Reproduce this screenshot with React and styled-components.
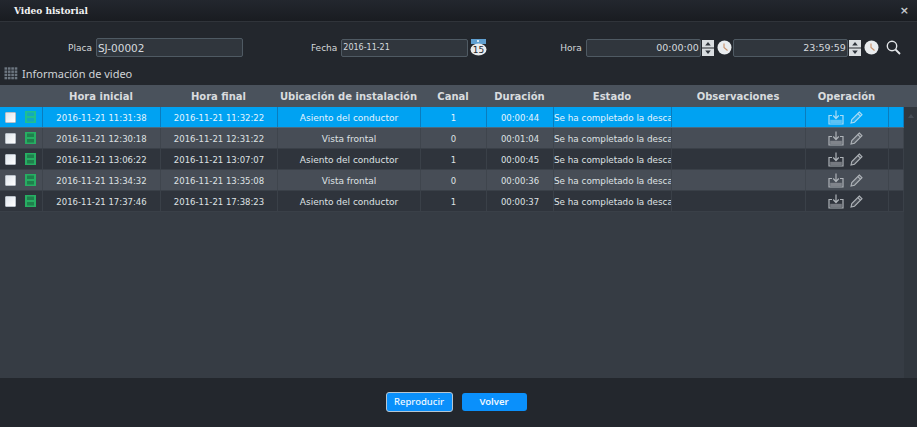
import React from "react";
import styled, { createGlobalStyle } from "styled-components";

const Global = createGlobalStyle`
  html, body { margin: 0; padding: 0; width: 917px; height: 427px; overflow: hidden; background: #23272d; }
  * { box-sizing: border-box; }
`;

const COLS = "43px 118px 117px 143px 66px 67px 118px 134px 83px 15px";

const Page = styled.div`
  width: 917px;
  height: 427px;
  display: flex;
  flex-direction: column;
  font-family: "DejaVu Sans", sans-serif;
  color: #e4e7ea;
  background: #23272d;
`;
const TitleBar = styled.div`
  height: 22px;
  flex: none;
  display: flex;
  align-items: center;
  justify-content: space-between;
  padding: 0 8px 0 14px;
  background: linear-gradient(#23272e, #191c21);
  border-bottom: 1px solid #30343a;
`;
const Title = styled.span`
  font-family: "DejaVu Serif", serif;
  font-size: 9px;
  font-weight: 700;
  color: #f2f3f4;
`;
const Close = styled.span`
  font-size: 11px;
  font-weight: 700;
  color: #c6cacd;
`;
const Filters = styled.div`
  height: 41px;
  flex: none;
  display: flex;
  align-items: center;
  padding: 10px 0 0 68px;
`;
const Label = styled.span`
  font-size: 9px;
  color: #d4d7da;
  margin-right: 4px;
`;
const Input = styled.div`
  width: ${p => p.$w}px;
  height: ${p => p.$h || 18}px;
  display: flex;
  align-items: center;
  justify-content: ${p => (p.$right ? "flex-end" : "flex-start")};
  padding: 0 1px;
  margin-left: ${p => p.$ml || 0}px;
  font-size: ${p => p.$fs || 9.5}px;
  color: #d6dadd;
  background: #30363d;
  border: 1px solid #4f5a63;
  border-radius: 2px;
`;
const Spinner = styled.div`
  width: 12px;
  height: 16px;
  margin-left: 1px;
  flex: none;
`;
const Group = styled.div`
  display: flex;
  align-items: center;
  margin-left: ${p => p.$ml}px;
`;
const SectionHead = styled.div`
  height: 22px;
  flex: none;
  display: flex;
  align-items: center;
  gap: 4px;
  padding: 0 0 2px 4px;
  font-family: "Noto Sans", sans-serif;
  font-size: 11px;
  color: #d0d4d8;
`;
const TablePanel = styled.div`
  flex: 1;
  display: flex;
  background: #363c44;
  min-height: 0;
`;
const TableMain = styled.div`
  width: 904px;
  flex: none;
`;
const ScrollTrack = styled.div`
  width: 13px;
  flex: none;
  display: flex;
  flex-direction: column;
  align-items: center;
  background: #31373e;
`;
const ScrollTop = styled.div`
  width: 100%;
  height: 22px;
  background: #4a525c;
  flex: none;
`;
const ScrollUp = styled.div`
  margin-top: 7px;
  border-left: 3px solid transparent;
  border-right: 3px solid transparent;
  border-bottom: 4px solid #454c55;
`;
const HeadRow = styled.div`
  display: grid;
  grid-template-columns: ${COLS};
  height: 22px;
  background: #4a525c;
`;
const HeadCell = styled.div`
  display: flex;
  align-items: center;
  justify-content: center;
  padding-right: 2px;
  font-size: 10px;
  font-weight: 700;
  color: #d9dcdf;
  white-space: nowrap;
  overflow: hidden;
`;
const Row = styled.div`
  display: grid;
  grid-template-columns: ${COLS};
  height: 21px;
  border-bottom: 1px solid ${p => (p.$selected ? "#4a6a80" : "#3a4048")};
  background: ${p => (p.$selected ? "#00a2f2" : p.$odd ? "#474d56" : "#2f343c")};
`;
const Cell = styled.div`
  display: flex;
  align-items: center;
  justify-content: ${p => (p.$left ? "flex-start" : "center")};
  padding-top: 1px;
  font-size: ${p => p.$fs || 9}px;
  color: ${p => (p.$selected ? "#e6f4fd" : "#dfe2e4")};
  white-space: nowrap;
  overflow: hidden;
  border-right: 1px solid ${p => (p.$selected ? "#0a7cbd" : p.$odd ? "#3f454d" : "#3a4048")};
`;
const IconCell = styled(Cell)`
  gap: 9px;
  justify-content: flex-start;
  padding: 0 0 0 5px;
`;
const ActionCell = styled(Cell)`
  gap: 6px;
  padding: 0 3px 0 0;
`;
const Check = styled.span`
  width: 11px;
  height: 11px;
  background: linear-gradient(135deg, #dfe5ec, #ffffff);
  border: 1px solid #b9c0c8;
  border-radius: 1px;
  flex: none;
`;
const Footer = styled.div`
  height: 49px;
  flex: none;
  display: flex;
  align-items: center;
  justify-content: center;
  gap: 9px;
  padding: 0 5px 2px 0;
  background: #23272d;
`;
const Button = styled.button`
  width: ${p => p.$w}px;
  height: ${p => (p.$focus ? 20 : 18)}px;
  padding: 0;
  font-family: "Noto Sans", sans-serif;
  font-size: 9.5px;
  font-weight: ${p => (p.$focus ? 500 : 600)};
  color: #eef7ff;
  background: #0a90fb;
  border: ${p => (p.$focus ? "1px solid #b8c6d2" : "none")};
  border-radius: 3px;
`;

const GridIcon = () => (
  <svg width="14" height="13" viewBox="0 0 14 13">
    {[0, 1, 2, 3].map(r =>
      [0, 1, 2, 3].map(c => (
        <rect key={`${r}${c}`} x={c * 3.4 + 0.5} y={r * 3.2 + 0.3} width="2.6" height="2.4" fill="#6d7781" />
      ))
    )}
  </svg>
);

const FilmIcon = ({ light }) => (
  <svg width="11" height="12" viewBox="0 0 11 12">
    <rect x="0" y="0" width="11" height="12" fill={light ? "#1fc08f" : "#27ae63"} />
    <rect x="2" y="1.5" width="7" height="3.5" fill={light ? "#14a9bd" : "#1f7f4c"} />
    <rect x="2" y="7" width="7" height="3.5" fill={light ? "#14a9bd" : "#1f7f4c"} />
  </svg>
);

const DownloadIcon = ({ color }) => (
  <svg width="16" height="15" viewBox="0 0 16 15" fill="none" stroke={color} strokeWidth="1.2">
    <path d="M4 5.5H1v8.5h14V5.5h-3" />
    <path d="M8 0.5v7.5M5.2 5.5 8 8.5l2.8-3" />
    <rect x="2.2" y="9.8" width="11.6" height="3.2" fill={color} fillOpacity="0.55" stroke="none" />
  </svg>
);

const PencilIcon = ({ color }) => (
  <svg width="13" height="13" viewBox="0 0 13 13" fill={color} fillOpacity="0.2" stroke={color} strokeWidth="1.1">
    <path d="M9.3 1 12 3.7 4.5 11.2 1 12l.8-3.5z" />
    <path d="M7.8 2.6 10.4 5.2" />
  </svg>
);

const SpinnerIcon = () => (
  <Spinner>
    <svg width="12" height="16" viewBox="0 0 12 16">
      <rect x="0" y="0" width="12" height="7.5" fill="#d9dde0" />
      <rect x="0" y="8.5" width="12" height="7.5" fill="#d9dde0" />
      <path d="M6 2 8.8 5.5H3.2z" fill="#30363d" />
      <path d="M6 14 8.8 10.5H3.2z" fill="#30363d" />
    </svg>
  </Spinner>
);

const ClockIcon = () => (
  <svg width="15" height="15" viewBox="0 0 15 15" style={{ marginLeft: 3 }}>
    <circle cx="7.5" cy="7.5" r="7" fill="#e9ecee" />
    <path d="M7 3.5V7.5L10.5 10.5" fill="none" stroke="#c9916a" strokeWidth="1.1" />
  </svg>
);

const CalendarIcon = () => (
  <svg width="17" height="17" viewBox="0 0 17 17" style={{ marginLeft: 2 }}>
    <rect x="1" y="0" width="15" height="5" fill="#5f9fd0" />
    <rect x="7" y="1" width="2" height="2" fill="#d5e6f2" />
    <ellipse cx="8.5" cy="10.5" rx="8" ry="6" fill="#e8ebed" />
    <text x="8.5" y="14" textAnchor="middle" fontSize="9" fontFamily="DejaVu Sans" fill="#23272d">15</text>
  </svg>
);

const SearchIcon = () => (
  <svg width="15" height="15" viewBox="0 0 15 15" fill="none" stroke="#e4e7ea" strokeWidth="1.4" style={{ marginLeft: 7 }}>
    <circle cx="6" cy="6" r="4.7" />
    <path d="M9.5 9.5 14 14" strokeWidth="1.8" />
  </svg>
);

const columns = ["", "Hora inicial", "Hora final", "Ubicación de instalación", "Canal", "Duración", "Estado", "Observaciones", "Operación", ""];

const rows = [
  ["2016-11-21 11:31:38", "2016-11-21 11:32:22", "Asiento del conductor", "1", "00:00:44"],
  ["2016-11-21 12:30:18", "2016-11-21 12:31:22", "Vista frontal", "0", "00:01:04"],
  ["2016-11-21 13:06:22", "2016-11-21 13:07:07", "Asiento del conductor", "1", "00:00:45"],
  ["2016-11-21 13:34:32", "2016-11-21 13:35:08", "Vista frontal", "0", "00:00:36"],
  ["2016-11-21 17:37:46", "2016-11-21 17:38:23", "Asiento del conductor", "1", "00:00:37"]
];

const App = () => (
  <Page>
    <Global />
    <TitleBar>
      <Title>Video historial</Title>
      <Close>×</Close>
    </TitleBar>
    <Filters>
      <Label>Placa</Label>
      <Input $w={147} $h={19} $fs={10.5}>SJ-00002</Input>
      <Group $ml={68}>
        <Label>Fecha</Label>
        <Input $w={127} $fs={8}>2016-11-21</Input>
        <CalendarIcon />
      </Group>
      <Group $ml={73}>
        <Label>Hora</Label>
        <Input $w={115} $right>00:00:00</Input>
        <SpinnerIcon />
        <ClockIcon />
        <Input $w={115} $ml={1} $right>23:59:59</Input>
        <SpinnerIcon />
        <ClockIcon />
        <SearchIcon />
      </Group>
    </Filters>
    <SectionHead>
      <GridIcon />
      Información de video
    </SectionHead>
    <TablePanel>
      <TableMain>
        <HeadRow>
          {columns.map((c, i) => (
            <HeadCell key={i}>{c}</HeadCell>
          ))}
        </HeadRow>
        {rows.map((r, i) => {
          const selected = i === 0;
          const odd = i % 2 === 1;
          const state = { $selected: selected, $odd: odd };
          const iconColor = selected ? "#a9dcf5" : "#aeb3b8";
          return (
            <Row key={i} {...state}>
              <IconCell {...state}>
                <Check />
                <FilmIcon light={selected} />
              </IconCell>
              {r.map((v, j) => (
                <Cell key={j} {...state} $fs={j === 2 ? 9 : 8.5}>{v}</Cell>
              ))}
              <Cell {...state} $left $fs={8.8}>Se ha completado la descarga</Cell>
              <Cell {...state} />
              <ActionCell {...state}>
                <DownloadIcon color={iconColor} />
                <PencilIcon color={iconColor} />
              </ActionCell>
              <Cell {...state} />
            </Row>
          );
        })}
      </TableMain>
      <ScrollTrack>
        <ScrollTop />
        <ScrollUp />
      </ScrollTrack>
    </TablePanel>
    <Footer>
      <Button $w={67} $focus>Reproducir</Button>
      <Button $w={65}>Volver</Button>
    </Footer>
  </Page>
);

export default App;
